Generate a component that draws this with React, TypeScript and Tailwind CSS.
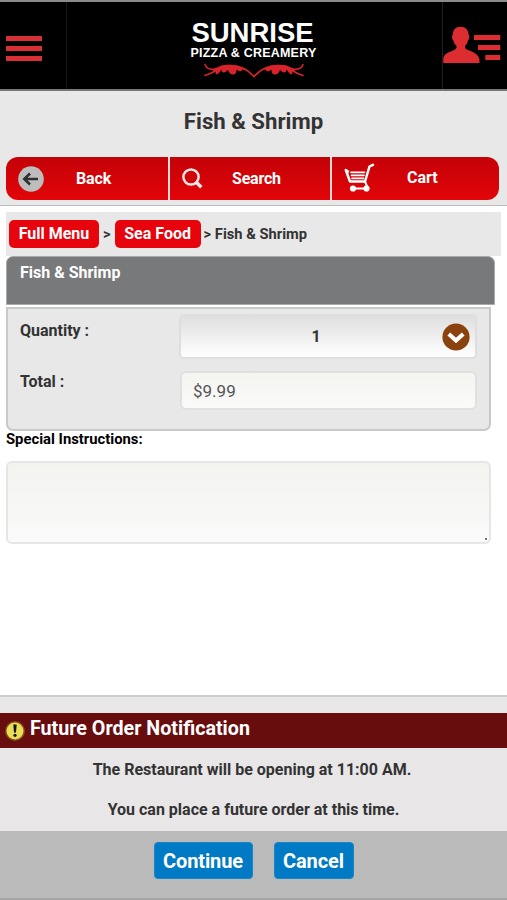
import React from 'react';

const MenuIcon = () => (
  <svg width="36" height="26" viewBox="0 0 36 26" fill="#d93035">
    <rect width="36" height="5" />
    <rect y="10" width="36" height="5" />
    <rect y="20" width="36" height="5" />
  </svg>
);

const AccountIcon = () => (
  <svg width="58" height="38" viewBox="0 0 58 38" fill="#dc2d31">
    <path d="M17.5 0.7C12.5 0.7 9.8 4 9.7 9C8.6 9.5 9 13.5 10.4 14.5C11 17 12 18.5 13.5 20C14 22.5 12.5 23.5 10 24.5C4 27 0.5 28.5 0.3 33V37H36.5V33.5C36 29 31 26.5 26.5 24.5C23 23.5 21.5 22.5 22 20C23.6 18.500 24.5 17 25 14.5C26.5 13.5 26.8 9.5 25.7 9C25.5 4 22.5 0.7 17.5 0.7Z" />
    <rect x="31" y="9" width="26.3" height="5" />
    <rect x="35" y="19" width="22.3" height="5" />
    <rect x="42.300" y="29" width="15" height="5" />
  </svg>
);

const Flourish = () => (
  <svg width="102" height="15" viewBox="0 0 102 15" fill="none" stroke="#d8232a" strokeLinecap="round">
    <g id="vine">
      <path d="M51 13.5C45 7 38 2.500 28 2.500C18 2.500 13 9 2 12.500" strokeWidth="1.700" />
      <path d="M2 1.500C3 5 7 6.800 13 6" strokeWidth="1.500" />
      <path
        d="M10 8.500C9.500 6.500 11.500 5 14 4.500C19 1.500 24 1.500 29 2C35 2.500 40 4 44 7C42 7.500 40.500 7 39.500 6.300C39 8.500 36.500 9 35 7.500C34.500 7 34 6.500 33.500 7C33.500 9 33 10.500 31 11.500C28.500 12 26 10.500 25 7C23.500 7.500 23.500 9 21 9.500C19.500 9.500 18.500 8.500 18.500 6.500C17 8 16.500 10.500 13.500 11.500C12 10.500 12.500 8.500 13 7.500Z"
        fill="#d8232a"
        stroke="none"
      />
    </g>
    <use href="#vine" transform="matrix(-1 0 0 1 102 0)" />
  </svg>
);

const BackIcon = () => (
  <svg width="26" height="26" viewBox="0 0 26 26">
    <circle cx="13" cy="13" r="12.800" fill="#bdbdbd" />
    <path d="M20 13H7M12 7.500L6.300 13L12 18.500" fill="none" stroke="#303030" strokeWidth="2.600" />
  </svg>
);

const SearchIcon = () => (
  <svg width="21" height="21" viewBox="0 0 21 21" fill="none" stroke="#f8e8e8">
    <circle cx="9" cy="9" r="7.600" strokeWidth="2.500" />
    <path d="M14.500 14.500L19.300 19.200" strokeWidth="3.500" />
  </svg>
);

const CartIcon = () => (
  <svg width="31" height="29" viewBox="0 0 31 29" fill="none" stroke="#fff" strokeLinecap="round" strokeLinejoin="round">
    <path d="M29 1.800L25.500 3.500L21 18.500H6L1.800 7L4 8.500" strokeWidth="2.500" />
    <path d="M7 9.300H20.500M7.500 12.300H20M8 15.300H19.500" strokeWidth="1.700" />
    <path d="M21 18.500L23.500 24.500M9 25.500H22" strokeWidth="2" />
    <circle cx="9" cy="25.500" r="3.100" fill="#fff" stroke="none" />
    <circle cx="22.500" cy="25.500" r="3.100" fill="#fff" stroke="none" />
  </svg>
);

const DropdownIcon = () => (
  <svg width="28" height="28" viewBox="0 0 28 28">
    <circle cx="14" cy="14" r="13.600" fill="#8a420e" />
    <path d="M6.800 11L14 17.500L21.200 11" fill="none" stroke="#fff" strokeWidth="4.200" />
  </svg>
);

const WarningIcon = () => (
  <svg width="22" height="22" viewBox="0 0 22 22">
    <circle cx="11" cy="11" r="10" fill="#a17a2c" opacity="0.550" />
    <circle cx="11" cy="11" r="8.500" fill="#e8de55" />
    <path d="M9.300 4.500H12.700L12 12.500H10Z" fill="#151505" />
    <circle cx="11" cy="15.300" r="1.600" fill="#151505" />
  </svg>
);

const Header = () => (
  <header className="flex h-[91px] border-t-2 border-b-2 border-t-[#8b8b8b] border-b-[#777] bg-black">
    <button className="flex w-[67px] items-start border-r border-[#151515] pt-[34px] pl-1.5">
      <MenuIcon />
    </button>
    <div className="flex flex-1 flex-col items-center font-['Liberation_Sans',sans-serif] font-bold text-white">
      <div className="mt-[17px] pr-1 text-[27.5px] leading-[28px]">SUNRISE</div>
      <div className="pr-0.5 text-[12.5px] leading-[12px] tracking-[0.2px]">PIZZA &amp; CREAMERY</div>
      <div className="mt-1 pr-0.5">
        <Flourish />
      </div>
    </div>
    <button className="flex w-[65px] items-start border-l border-[#202020] pt-6">
      <AccountIcon />
    </button>
  </header>
);

const NavBar = () => (
  <nav className="mr-2 ml-1.5 flex h-[43px] gap-0.5 overflow-hidden rounded-xl bg-[#f8dada] text-base font-bold text-white">
    <button className="flex w-[162px] items-center bg-linear-to-b from-[#c40207] to-[#e20509] pl-3">
      <BackIcon />
      <span className="ml-8 tracking-[-0.1px]">Back</span>
    </button>
    <button className="flex w-[160px] items-center bg-linear-to-b from-[#c40207] to-[#e20509] pl-3">
      <SearchIcon />
      <span className="ml-[29px] tracking-[-0.2px]">Search</span>
    </button>
    <button className="flex flex-1 items-start bg-linear-to-b from-[#c40207] to-[#e20509] pt-1.5 pl-3">
      <CartIcon />
      <span className="mt-[3px] ml-8">Cart</span>
    </button>
  </nav>
);

const Breadcrumbs = () => (
  <div className="mx-1.5 flex h-[44px] items-center bg-[#e8e8e8] pl-[3px] text-[14.7px] font-bold text-[#333]">
    <a className="flex h-7 w-[90px] items-center justify-center rounded-[5px] bg-[#e7040d] text-[16px] text-white">Full Menu</a>
    <span className="mx-1">&gt;</span>
    <a className="flex h-7 w-[86px] items-center justify-center rounded-[5px] bg-[#e7040d] text-[16px] text-white">Sea Food</a>
    <span className="ml-[3px]">&gt; Fish &amp; Shrimp</span>
  </div>
);

const OrderNotification = () => (
  <footer className="mt-auto h-[205px] border-t-2 border-[#ccc] bg-[#e8e8e8] font-bold">
    <div className="mt-4 flex h-[35px] bg-[#670d0e] pl-1 text-white">
      <div className="mt-[7px]">
        <WarningIcon />
      </div>
      <h2 className="ml-1 text-[19.7px] leading-[31px]">Future Order Notification</h2>
    </div>
    <div className="h-[83px] bg-[#e8e6e7] pt-[11px] text-center text-base leading-[22px] text-[#333]">
      <p className="pr-[3px]">The Restaurant will be opening at 11:00 AM.</p>
      <p className="mt-[18px]">You can place a future order at this time.</p>
    </div>
    <div className="flex h-[69px] justify-center gap-[21px] border-b-2 border-[#a5a5a5] bg-[#bababa] pt-[11px] text-[20px] text-white">
      <button className="h-[37px] w-[99px] rounded-[4px] border border-[#1686c6] bg-[#007ac4] tracking-[-0.1px]">Continue</button>
      <button className="h-[37px] w-[80px] rounded-[4px] border border-[#1686c6] bg-[#007ac4] tracking-[-0.1px]">Cancel</button>
    </div>
  </footer>
);

export default function App() {
  return (
    <div className="flex h-[900px] w-[507px] flex-col overflow-hidden bg-white font-[Roboto,sans-serif]">
      <Header />
      <section className="h-[115px] border-b border-[#bcbcbc] bg-[#e8e8e8]">
        <h1 className="pt-[15px] pb-5 text-center text-[22.2px] leading-[31px] font-bold text-[#333]">Fish &amp; Shrimp</h1>
        <NavBar />
      </section>

      <main className="pt-1.5">
        <Breadcrumbs />
        <div className="ml-1.5 h-[49px] w-[489px] rounded-t-[7px] border border-[#a9aaab] bg-[#78797b] pt-1 pl-[13px] text-base font-bold text-white">
          Fish &amp; Shrimp
        </div>
        <div className="mt-0.5 ml-1.5 h-[124px] w-[485px] rounded-b-[7px] border-2 border-[#c8caca] bg-[#e8e8e8] text-base font-bold text-[#333]">
          <div className="flex">
            <label className="w-[171px] pt-[10px] pl-3">Quantity :</label>
            <div className="mt-[5px] flex h-[45px] w-[298px] items-center rounded-[5px] border-2 border-[#dedede] bg-linear-to-b from-[#dfdfdf] to-white pr-[5px]">
              <span className="flex-1 pl-[9px] text-center">1</span>
              <DropdownIcon />
            </div>
          </div>
          <div className="flex">
            <label className="w-[172px] pt-[11px] pl-3">Total :</label>
            <div className="mt-3 flex h-[39px] w-[297px] items-center rounded-[6px] border-2 border-[#e0e0e0] bg-linear-to-b from-[#f4f4f0] to-[#fafafa] pt-0.5 pl-[11px] text-[17px] font-normal text-[#555]">
              $9.99
            </div>
          </div>
        </div>
        <label className="ml-1.5 block text-[14.8px] leading-[17px] font-bold text-black">Special Instructions:</label>
        <div className="mt-[13px] ml-1.5 flex h-[83px] w-[485px] items-end justify-end rounded-[6px] border-2 border-[#e6e7e5] bg-linear-to-b from-[#f3f3f0] to-[#fafafa] p-0.5">
          <div className="h-0.5 w-0.5 bg-[#777]" />
        </div>
      </main>
      <OrderNotification />
    </div>
  );
}
